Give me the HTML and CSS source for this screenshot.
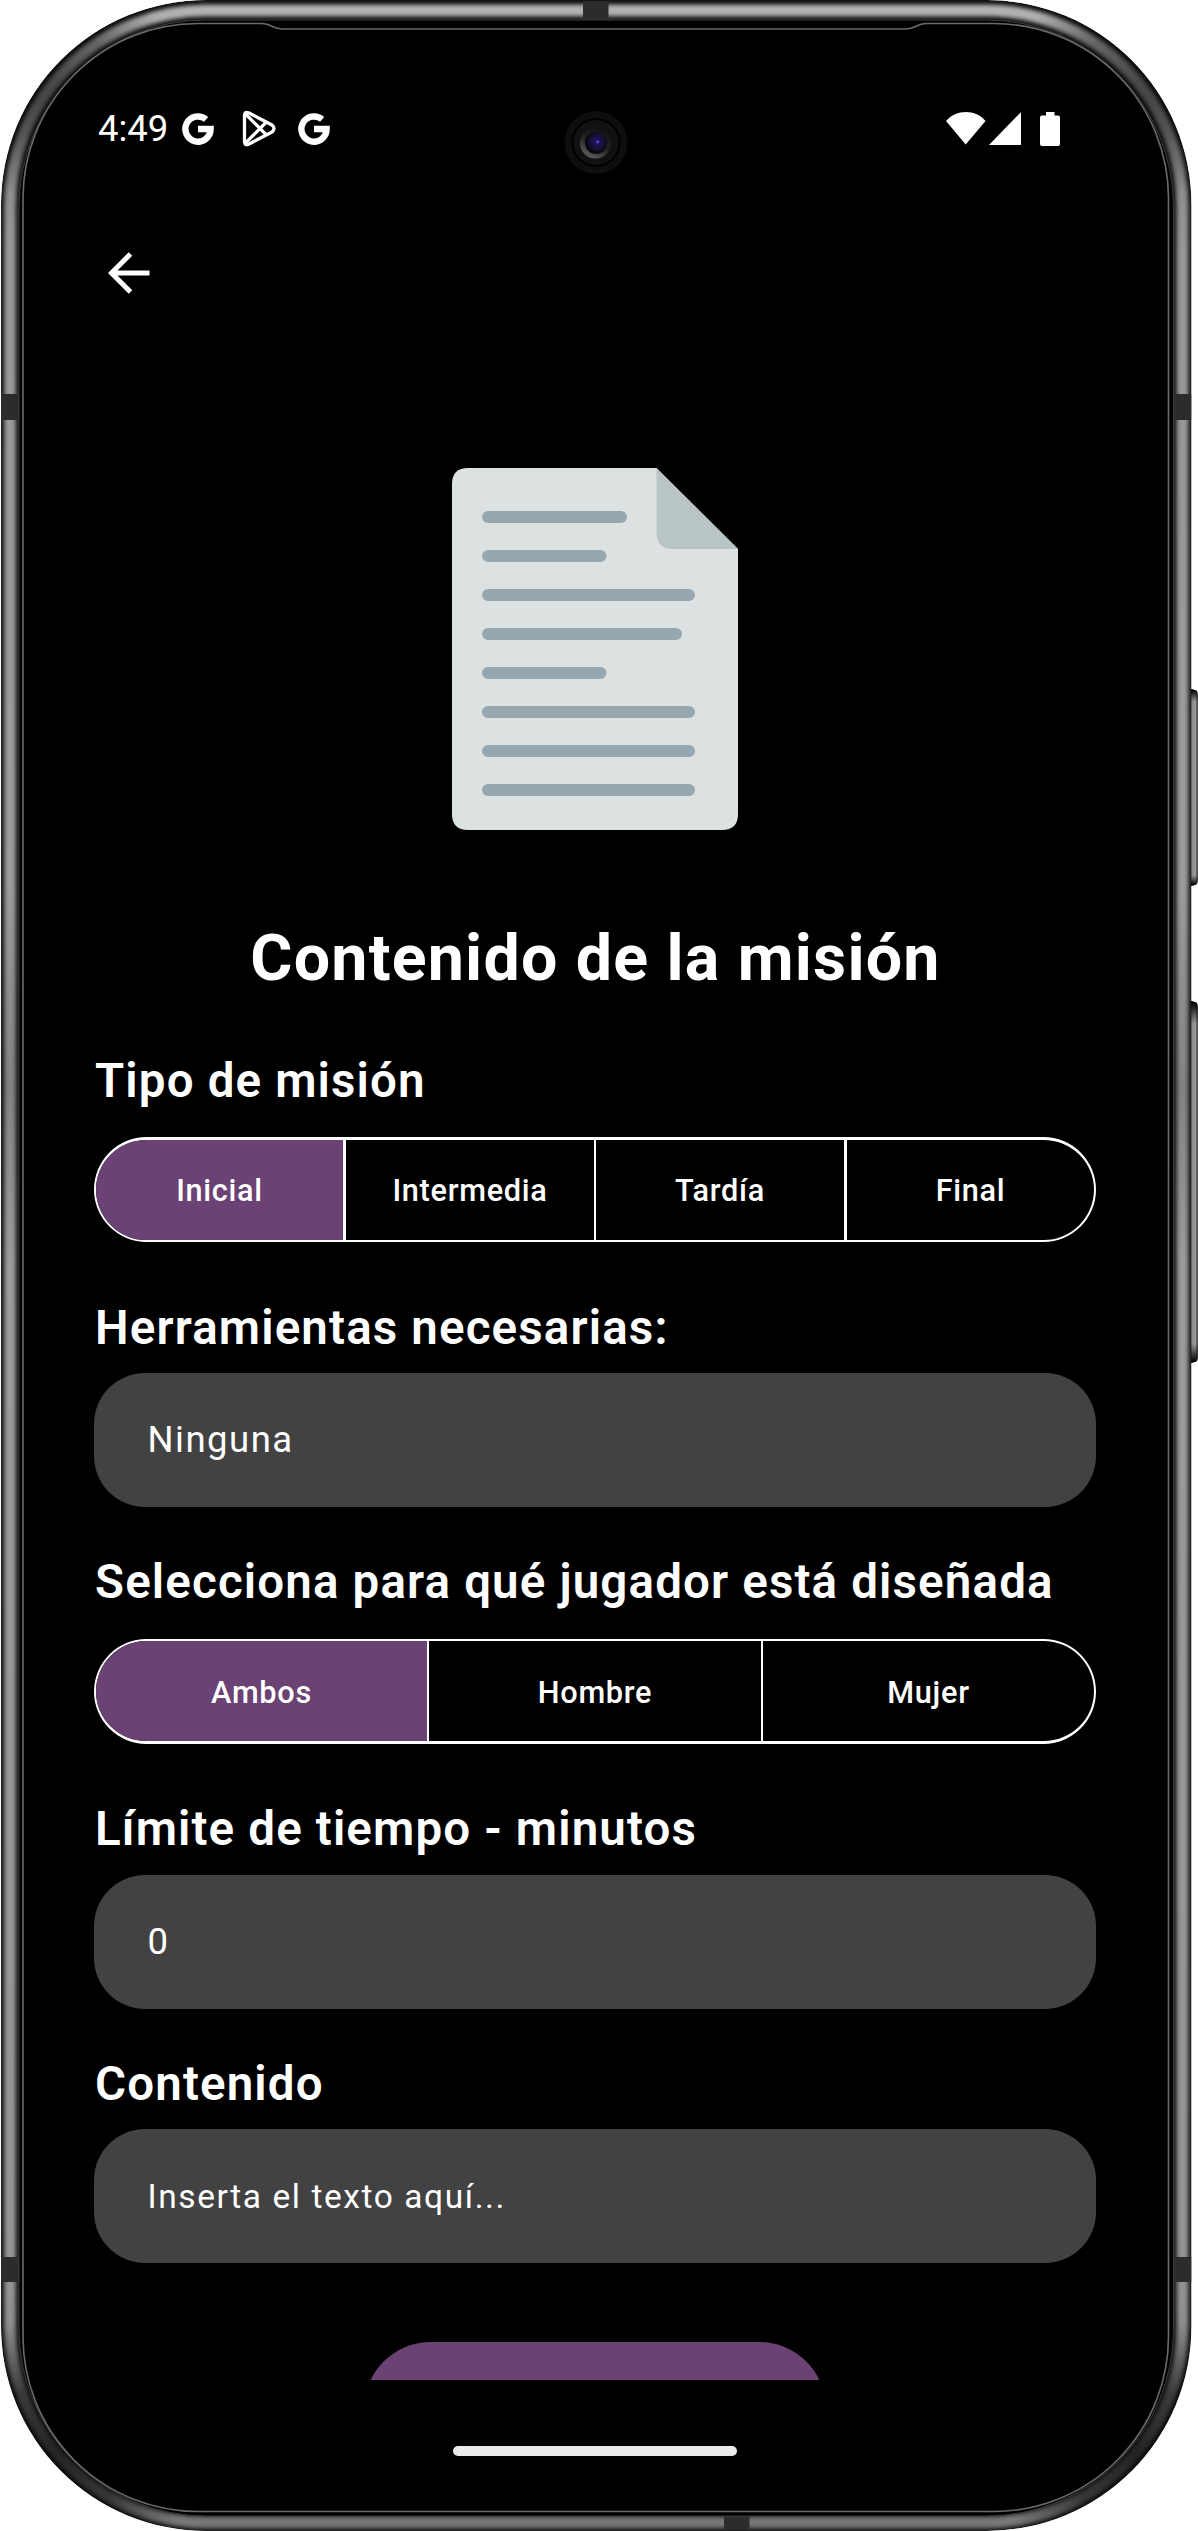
FILE: index.html
```html
<!DOCTYPE html>
<html lang="es">
<head>
<meta charset="utf-8">
<title>Contenido de la misión</title>
<link rel="stylesheet" href="styles.css">
</head>
<body>
<div class="phone">
  <svg class="phone-frame" viewBox="0 0 1198 2531" aria-hidden="true">
    <defs>
      <linearGradient id="metal" gradientUnits="userSpaceOnUse" x1="0" y1="0" x2="0" y2="2531">
        <stop offset="0" stop-color="#b8b8b8"/><stop offset=".04" stop-color="#808080"/>
        <stop offset=".1" stop-color="#989898"/><stop offset=".35" stop-color="#9c9c9c"/><stop offset=".43" stop-color="#828282"/>
        <stop offset=".5" stop-color="#9c9c9c"/><stop offset=".9" stop-color="#949494"/><stop offset="1" stop-color="#767676"/>
      </linearGradient>
      <radialGradient id="shadeTop"><stop offset="0" stop-opacity=".5"/><stop offset=".5" stop-opacity=".36"/><stop offset="1" stop-opacity="0"/></radialGradient>
      <radialGradient id="shadeBottom"><stop offset="0" stop-opacity=".72"/><stop offset=".5" stop-opacity=".56"/><stop offset="1" stop-opacity="0"/></radialGradient>
      <linearGradient id="key" x1="0" x2="1" y1="0" y2="0"><stop offset="0" stop-color="#444"/><stop offset=".25" stop-color="#8c8c8c"/><stop offset=".75" stop-color="#999"/><stop offset="1" stop-color="#222"/></linearGradient>
      <linearGradient id="keyEnds" x1="0" x2="0" y1="0" y2="1"><stop offset="0"/><stop offset=".06" stop-opacity="0"/><stop offset=".95" stop-opacity="0"/><stop offset="1"/></linearGradient>
      <radialGradient id="lens" cx=".55" cy=".45"><stop offset="0" stop-color="#3a2cb0"/><stop offset=".25" stop-color="#1d1250"/><stop offset=".7" stop-color="#14102e"/><stop offset="1" stop-color="#050508"/></radialGradient>
      <linearGradient id="lensRim" x1=".2" y1="1" x2=".7" y2="0"><stop offset="0" stop-color="#666"/><stop offset=".5" stop-color="#222"/><stop offset="1" stop-color="#111"/></linearGradient>
      <filter id="soft" filterUnits="userSpaceOnUse" x="0" y="0" width="1198" height="2531"><feGaussianBlur stdDeviation="2.2"/></filter>
      <clipPath id="body"><rect x="1" y="0" width="1190.5" height="2531" rx="205"/></clipPath>
    </defs>
    <g>
      <rect x="1182" y="689" width="15.5" height="197" rx="6" fill="#111"/>
      <rect x="1190" y="691" width="7.5" height="193" rx="3" fill="url(#key)"/>
      <rect x="1190" y="690" width="7.5" height="195" rx="3" fill="url(#keyEnds)"/>
      <rect x="1182" y="1001" width="15.5" height="362" rx="6" fill="#111"/>
      <rect x="1190" y="1003" width="7.5" height="358" rx="3" fill="url(#key)"/>
      <rect x="1190" y="1002" width="7.5" height="360" rx="3" fill="url(#keyEnds)"/>
    </g>
    <g clip-path="url(#body)">
      <rect x="1" width="1190.5" height="2531" rx="205" fill="#0c0c0c"/>
      <rect x="10" y="10.5" width="1172.500" height="2512" rx="196" fill="none" stroke="url(#metal)" stroke-width="12" filter="url(#soft)"/>
      <circle cx="45" cy="75" r="125" fill="url(#shadeTop)"/>
      <circle cx="1147" cy="75" r="125" fill="url(#shadeTop)"/>
      <circle cx="52" cy="2456" r="140" fill="url(#shadeBottom)"/>
      <circle cx="1140" cy="2456" r="140" fill="url(#shadeBottom)"/>
      <g fill="#2c2c2c">
        <rect x="1" y="394" width="18" height="26"/><rect x="1173" y="394" width="18.5" height="26"/>
        <rect x="1" y="2257" width="18" height="25"/><rect x="1173" y="2257" width="18.5" height="25"/>
        <rect x="583" y="1" width="25.5" height="19"/><rect x="724" y="2514" width="25.5" height="16"/>
      </g>
    </g>
    <rect x="19" y="20" width="1154.5" height="2496" rx="187" stroke="#3c3c3c"/>
    <path d="M198 23.5H262C272 23.5 272 29 282 29H906C916 29 916 23.5 926 23.5H993.5A175 175 0 0 1 1168.5 198.5V2336.5A175 175 0 0 1 993.5 2511.5H198A175 175 0 0 1 23 2336.5V198.5A175 175 0 0 1 198 23.5Z" stroke="#6a6a6a" stroke-width="1.6"/>
    <g>
      <circle cx="596" cy="142.5" r="31.5" fill="#0e0e0e"/>
      <circle cx="596" cy="142.5" r="23.5" fill="#111" stroke="#000" stroke-width="2"/>
      <circle cx="595.5" cy="143" r="15.5" fill="url(#lensRim)"/>
      <circle cx="596" cy="143" r="11" fill="url(#lens)"/>
      <circle cx="598" cy="142" r="1.2" fill="#5a4ae0"/>
    </g>
  </svg>

  <div class="screen">
    <header class="status-bar">
      <span class="time">4:49</span>
      <div class="notifications">
        <svg width="32" height="32" viewBox="0 0 32 32"><path d="M24.1 6.4A12.6 12.6 0 1 0 28.6 16H16" fill="none" stroke="#fff" stroke-width="6.4"/></svg>
        <svg width="34" height="37" viewBox="0 0 34 37" fill="none" stroke="#fff" stroke-linejoin="round"><path d="M2.5 5.5Q2.5 1 6.5 2.8L30 15Q34 18.5 30 22L6.5 34.2Q2.5 36 2.5 31.5Z" stroke-width="3.3"/><path d="M3.5 4L24.5 25M3.5 33L24.5 12" stroke-width="3.2"/></svg>
        <svg width="32" height="32" viewBox="0 0 32 32"><path d="M24.1 6.4A12.6 12.6 0 1 0 28.6 16H16" fill="none" stroke="#fff" stroke-width="6.4"/></svg>
      </div>
      <div class="system-icons">
        <svg width="40" height="33" viewBox="0 0 40 33" fill="#fff"><path d="M0 9C10-3 30-3 39.5 9L19.7 32.5Z"/></svg>
        <svg width="32" height="33" viewBox="0 0 32 33" fill="#fff"><path d="M32 0V33H0Z"/></svg>
        <svg width="20" height="34" viewBox="0 0 20 34" fill="#fff"><path d="M6 0H14.5V3.5H18Q20 3.5 20 5.5V32Q20 34 18 34H2Q0 34 0 32V5.5Q0 3.5 2 3.5H6Z"/></svg>
      </div>
    </header>

    <nav class="toolbar">
      <svg width="42" height="42" viewBox="0 0 42 42" fill="none" stroke="#fff" stroke-width="5"><path d="M22.5 2L3.5 21L22.5 40M3.5 21H41.5"/></svg>
    </nav>

    <main class="content">
      <svg class="document" width="286" height="362" viewBox="0 0 286 362">
        <path d="M16 0H204.5L286 81V346Q286 362 270 362H16Q0 362 0 346V16Q0 0 16 0Z" fill="#dce2e2"/>
        <path d="M204.5 0V64Q204.5 81 221 81H286Z" fill="#b9c4c7"/>
        <path d="M36 49H169M36 88H148.5M36 127H237M36 166H224M36 205H148.5M36 244H237M36 283H237M36 322H237" stroke="#96a7b0" stroke-width="12" stroke-linecap="round"/>
      </svg>

      <h1 class="title">Contenido de la misión</h1>

      <section class="group group-type">
        <h2 class="label">Tipo de misión</h2>
        <div class="segmented segmented-four">
          <span class="segment selected">Inicial</span><span class="segment">Intermedia</span><span class="segment">Tardía</span><span class="segment">Final</span>
        </div>
      </section>
      <section class="group group-tools">
        <h2 class="label">Herramientas necesarias:</h2>
        <div class="field">Ninguna</div>
      </section>
      <section class="group group-player">
        <h2 class="label">Selecciona para qué jugador está diseñada</h2>
        <div class="segmented segmented-three">
          <span class="segment selected">Ambos</span><span class="segment">Hombre</span><span class="segment">Mujer</span>
        </div>
      </section>
      <section class="group group-time">
        <h2 class="label">Límite de tiempo - minutos</h2>
        <div class="field">0</div>
      </section>
      <section class="group group-text">
        <h2 class="label">Contenido</h2>
        <div class="field field-placeholder">Inserta el texto aquí...</div>
      </section>
      <div class="submit"></div>
    </main>
    <div class="home-bar"></div>
  </div>
</div>
</body>
</html>
```
FILE: styles.css
```css
* { box-sizing: border-box; }
body { margin: 0; background: #fff; font-family: Roboto, "Liberation Sans", sans-serif; color: #fff; }
svg { display: block; flex: none; }
.phone { position: relative; width: 1198px; height: 2531px; overflow: hidden; }
.phone-frame { position: absolute; inset: 0; width: 1198px; height: 2531px; }
.screen { position: relative; display: flex; flex-direction: column; height: 2531px; padding: 107px 102px 75px 94px; }

.status-bar { display: flex; align-items: center; height: 43px; padding: 0 36px 0 4px; }
.time { font-size: 36.5px; line-height: 43px; }
.notifications { display: flex; align-items: center; gap: 28px; margin-left: 14px; }
.notifications svg:last-child { margin-left: -6px; }
.system-icons { display: flex; align-items: center; margin-left: auto; }
.system-icons svg:nth-child(2) { margin-left: 3px; }
.system-icons svg:nth-child(3) { margin-left: 19px; }

.toolbar { height: 64px; margin-top: 102px; padding-left: 14px; }

.content { display: flex; flex-direction: column; height: 2022px; margin-top: 42px; padding-top: 110px; overflow: hidden; }
.document { align-self: center; }
.title { margin: 91px 0 58px; padding-left: 1px; font-size: 64.5px; line-height: 75px; font-weight: 700; letter-spacing: 1.2px; text-align: center; }
.group { flex: none; }
.label { margin: 0 0 17px; padding-left: 1px; font-size: 47.5px; line-height: 55px; font-weight: 600; letter-spacing: 1.14px; white-space: nowrap; }
.group-type .label { margin-bottom: 28px; }
.group-player .label { margin-bottom: 29px; }
.group-time .label { margin-bottom: 18px; }
.group-tools { margin-top: 59px; }
.group-player { margin-top: 48px; }
.group-time { margin-top: 58px; }
.group-text { margin-top: 48px; }

.segmented { display: grid; height: 105px; overflow: hidden; border: 2px solid #fff; border-radius: 52.5px; }
.segmented-four { grid-template-columns: 247px 251px 250px 1fr; border-top-width: 3px; }
.segmented-three { grid-template-columns: 331px 334px 1fr; border-bottom-width: 3px; }
.segment { display: flex; align-items: center; justify-content: center; font-size: 30.7px; line-height: 35px; font-weight: 500; letter-spacing: 0.7px; }
.segment + .segment { border-left: 2px solid #fff; }
.segmented-four .segment:nth-child(even) { border-left-width: 3px; }
.segmented-three .segment { padding-top: 3px; }
.selected { background: #6a4274; }

.field { display: flex; align-items: center; height: 134px; padding: 0 53.5px; border-radius: 51px; background: #424242; font-size: 36.5px; line-height: 42px; letter-spacing: 1.5px; }
.field-placeholder { font-size: 33.5px; line-height: 39px; letter-spacing: 1.58px; }

.submit { flex: none; align-self: center; width: 462px; height: 134px; margin-top: 79px; border-radius: 67px; background: #6a4274; }
.home-bar { flex: none; align-self: center; width: 284px; height: 10px; margin-top: 66px; border-radius: 5px; background: #ebebeb; }
```
